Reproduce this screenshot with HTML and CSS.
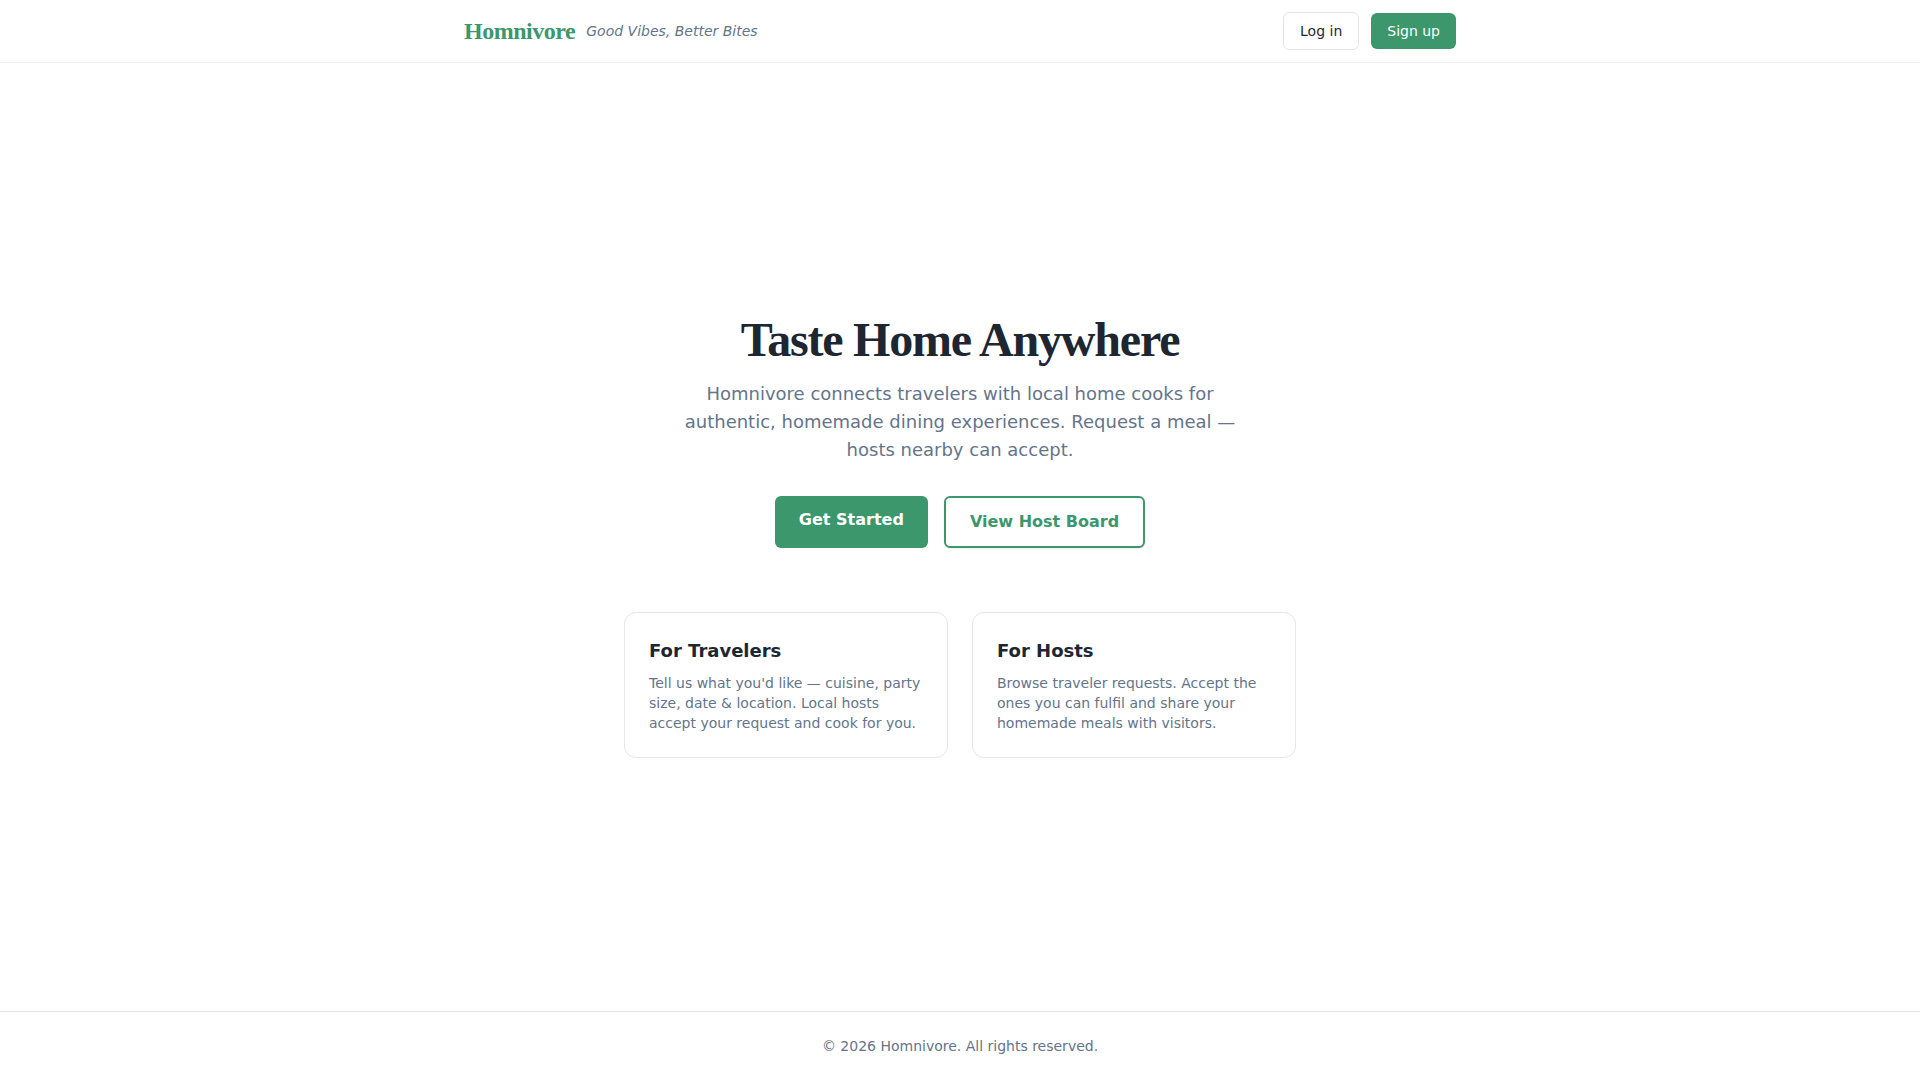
FILE: index.html
```html
<!DOCTYPE html>
<html lang="en">
<head>
<meta charset="utf-8">
<title>Homnivore — Good Vibes, Better Bites</title>
<link rel="stylesheet" href="styles.css">
</head>
<body>
<header class="site-header">
  <div class="container header-inner">
    <div class="brand">
      <a class="logo" href="#">Homnivore</a>
      <span class="tagline">Good Vibes, Better Bites</span>
    </div>
    <nav class="auth">
      <a class="btn-login" href="#">Log in</a>
      <a class="btn-signup" href="#">Sign up</a>
    </nav>
  </div>
</header>
<main class="hero">
  <div class="hero-inner">
    <h1 class="hero-title">Taste Home Anywhere</h1>
    <p class="hero-text">Homnivore connects travelers with local home cooks for authentic, homemade dining experiences. Request a meal — hosts nearby can accept.</p>
    <div class="hero-actions">
      <a class="btn-primary" href="#">Get Started</a>
      <a class="btn-outline" href="#">View Host Board</a>
    </div>
    <div class="cards">
      <div class="card">
        <h2 class="card-title">For Travelers</h2>
        <p class="card-text">Tell us what you'd like — cuisine, party size, date &amp; location. Local hosts accept your request and cook for you.</p>
      </div>
      <div class="card">
        <h2 class="card-title">For Hosts</h2>
        <p class="card-text">Browse traveler requests. Accept the ones you can fulfil and share your homemade meals with visitors.</p>
      </div>
    </div>
  </div>
</main>
<footer class="site-footer">
  <p class="footer-text">© 2026 Homnivore. All rights reserved.</p>
</footer>
</body>
</html>
```
FILE: styles.css
```css
* { box-sizing: border-box; }
html, body { margin: 0; padding: 0; }
body {
  font-family: "DejaVu Sans", sans-serif;
  color: #1f2937;
  background: #ffffff;
  min-height: 100vh;
  display: flex;
  flex-direction: column;
}
a { text-decoration: none; }

.container {
  max-width: 1024px;
  margin: 0 auto;
  padding: 0 16px;
  width: 100%;
}

.site-header {
  border-bottom: 1px solid #eceef2;
}
.header-inner {
  display: flex;
  align-items: center;
  justify-content: space-between;
  padding-top: 12px;
  padding-bottom: 12px;
}
.brand {
  display: flex;
  align-items: center;
  gap: 11px;
}
.logo {
  font-family: "Liberation Serif", serif;
  font-weight: 700;
  font-size: 24px;
  line-height: 32px;
  letter-spacing: -0.02em;
  color: #3c976c;
}
.tagline {
  font-style: italic;
  font-size: 14px;
  line-height: 20px;
  color: #64748b;
}
.auth {
  display: flex;
  align-items: center;
  gap: 12px;
}
.btn-login {
  font-size: 14px;
  line-height: 20px;
  padding: 8px 16px;
  border: 1px solid #e2e5ea;
  border-radius: 6px;
  color: #1f2937;
}
.btn-signup {
  font-size: 14px;
  line-height: 20px;
  padding: 8px 16px;
  border-radius: 6px;
  background: #3c976c;
  color: #ffffff;
}

.hero {
  flex: 1;
  display: flex;
  align-items: center;
  justify-content: center;
  padding: 0 16px;
}
.hero-inner {
  display: flex;
  flex-direction: column;
  align-items: center;
  text-align: center;
}
.hero-title {
  margin: 0;
  font-family: "Liberation Serif", serif;
  font-weight: 700;
  font-size: 48px;
  line-height: 48px;
  letter-spacing: -0.025em;
  color: #1e2631;
}
.hero-text {
  margin: 16px 0 0;
  max-width: 576px;
  font-size: 18px;
  line-height: 28px;
  color: #64748b;
}
.hero-actions {
  margin-top: 32px;
  display: flex;
  gap: 16px;
}
.btn-primary {
  display: inline-block;
  padding: 12px 24px 16px;
  font-size: 16px;
  line-height: 24px;
  font-weight: 700;
  color: #ffffff;
  background: #3c976c;
  border-radius: 6px;
}
.btn-outline {
  display: inline-block;
  padding: 12px 24px;
  font-size: 16px;
  line-height: 24px;
  font-weight: 700;
  color: #3c976c;
  background: #ffffff;
  border: 2px solid #3c976c;
  border-radius: 6px;
  box-shadow: 0 1px 2px rgba(0, 0, 0, 0.08);
}

.cards {
  margin-top: 64px;
  width: 672px;
  display: grid;
  grid-template-columns: 1fr 1fr;
  gap: 24px;
  text-align: left;
}
.card {
  border: 1px solid #e5e7eb;
  border-radius: 12px;
  padding: 24px;
  background: #ffffff;
}
.card-title {
  margin: 0;
  font-size: 18px;
  line-height: 28px;
  font-weight: 700;
  color: #1e2631;
}
.card-text {
  margin: 8px 0 0;
  font-size: 14px;
  line-height: 20px;
  color: #64748b;
}

.site-footer {
  border-top: 1px solid #e5e7eb;
  padding: 24px 16px;
}
.footer-text {
  margin: 0;
  text-align: center;
  font-size: 14px;
  line-height: 20px;
  color: #64748b;
}
```
